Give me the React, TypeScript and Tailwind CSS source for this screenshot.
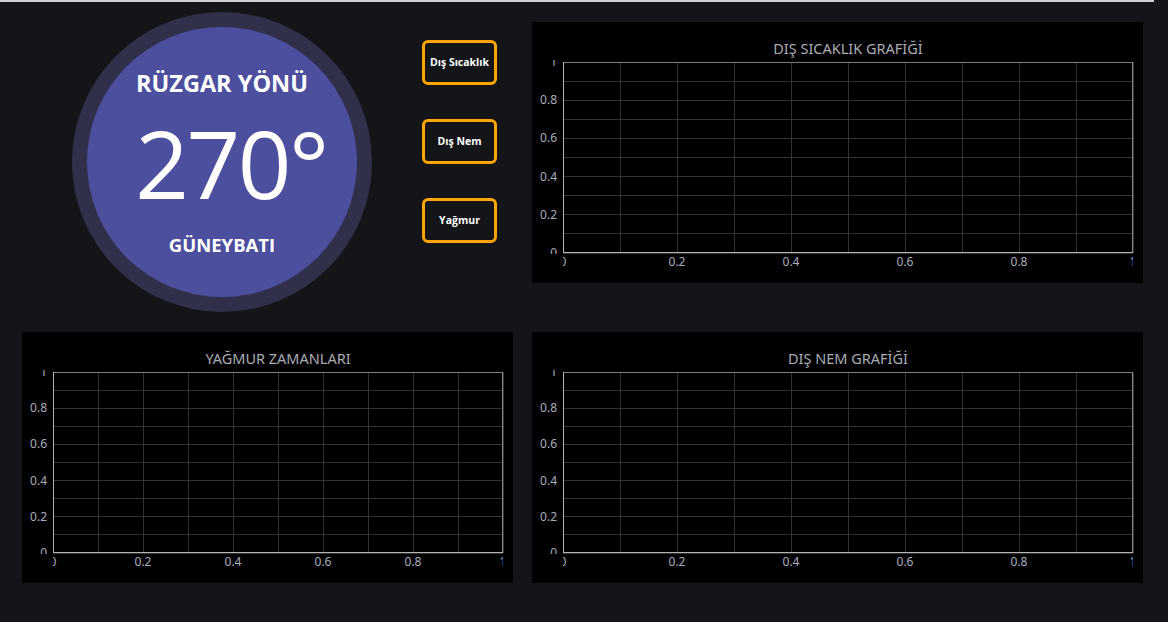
import React from "react";

type ChartProps = { width: number; height: number; title: string; id: string };

const ML = 31, MR = 10, MT = 40, MB = 30;

function Chart({ width, height, title, id }: ChartProps) {
  const pw = width - ML - MR;
  const ph = height - MT - MB;
  const x0 = ML, y0 = MT, x1 = ML + pw, y1 = MT + ph;
  const steps = Array.from({ length: 11 }, (_, i) => i / 10);
  const labels = [0, 0.2, 0.4, 0.6, 0.8, 1];
  const fmt = (v: number) => (v === 0 ? "0" : v === 1 ? "1" : v.toFixed(1));
  return (
    <div className="bg-black" style={{ width, height }}>
      <svg width={width} height={height} className="block" style={{ fontFamily: '"Noto Sans", "DejaVu Sans", sans-serif' }}>
        <defs>
          <clipPath id={`${id}-y`}>
            <rect x={0} y={y0 - 2} width={x0} height={ph + 3} />
          </clipPath>
          <clipPath id={`${id}-x`}>
            <rect x={x0} y={y1} width={pw} height={MB} />
          </clipPath>
        </defs>
        <text x={x0 + pw / 2} y={32} textAnchor="middle" fontSize={14.5} fill="#a9acb4">
          {title}
        </text>
        {steps.map((s, i) => (
          <line key={`v${i}`} x1={x0 + s * pw} x2={x0 + s * pw} y1={y0} y2={y1} stroke="#333333" strokeWidth={1} shapeRendering="crispEdges" />
        ))}
        {steps.map((s, i) => (
          <line key={`h${i}`} x1={x0} x2={x1} y1={y1 - s * ph} y2={y1 - s * ph} stroke="#333333" strokeWidth={1} shapeRendering="crispEdges" />
        ))}
        <line x1={x0} x2={x1} y1={y0 + 0.5} y2={y0 + 0.5} stroke="#7a7a7a" shapeRendering="crispEdges" />
        <line x1={x1 - 0.5} x2={x1 - 0.5} y1={y0} y2={y1} stroke="#8a8a8a" shapeRendering="crispEdges" />
        <line x1={x0 + 0.5} x2={x0 + 0.5} y1={y0} y2={y1} stroke="#b4b4b4" shapeRendering="crispEdges" />
        <line x1={x0} x2={x1} y1={y1 - 0.5} y2={y1 - 0.5} stroke="#b4b4b4" shapeRendering="crispEdges" />
        <g clipPath={`url(#${id}-y)`}>
          {labels.map((v) => (
            <text key={`yl${v}`} x={x0 - 6} y={y1 - v * ph + 4} textAnchor="end" fontSize={12} fill="#a8adbd">
              {fmt(v)}
            </text>
          ))}
        </g>
        <g clipPath={`url(#${id}-x)`}>
          {labels.map((v) => (
            <text key={`xl${v}`} x={x0 + v * pw} y={y1 + 13} textAnchor="middle" fontSize={12} fill="#a8adbd">
              {fmt(v)}
            </text>
          ))}
        </g>
      </svg>
    </div>
  );
}

function Btn({ label }: { label: string }) {
  return (
    <button
      className="w-[75px] h-[45px] rounded-[6px] border-[3px] border-[#ffa500] bg-transparent text-white text-[10.5px] font-bold flex items-center justify-center"
      style={{ fontFamily: '"Open Sans", "Noto Sans", sans-serif' }}
    >
      {label}
    </button>
  );
}

export default function App() {
  return (
    <div className="w-[1168px] h-[622px] bg-[#141519] overflow-hidden relative">
      <div className="w-[1154px] h-[2px] bg-[#cfd3d6]" />
      <div className="pl-[22px]">
        <div className="flex">
          <div className="w-[510px] flex">
            <div className="ml-[50px] mt-[10px] w-[300px] h-[300px] rounded-full bg-[#30304a] flex items-center justify-center">
              <div
                className="w-[270px] h-[270px] rounded-full bg-[#4c4f9e] flex flex-col items-center text-white"
                style={{ fontFamily: '"Open Sans", "Noto Sans", sans-serif' }}
              >
                <div className="mt-[41px] text-[23.5px] font-bold leading-[30px]">RÜZGAR YÖNÜ</div>
                <div className="mt-[5px] ml-[18px] text-[94px] font-normal leading-[120px] tracking-[-2.5px]">270°</div>
                <div className="mt-[10px] text-[18.5px] font-bold leading-[24px]">GÜNEYBATI</div>
              </div>
            </div>
            <div className="ml-[50px] mt-[38px] flex flex-col gap-[34px]">
              <Btn label="Dış Sıcaklık" />
              <Btn label="Dış Nem" />
              <Btn label="Yağmur" />
            </div>
          </div>
          <div className="mt-[20px]">
            <Chart id="c1" width={611} height={261} title="DIŞ SICAKLIK GRAFİĞİ" />
          </div>
        </div>
        <div className="flex mt-[20px] gap-[19px]">
          <Chart id="c2" width={491} height={251} title="YAĞMUR ZAMANLARI" />
          <Chart id="c3" width={611} height={251} title="DIŞ NEM GRAFİĞİ" />
        </div>
      </div>
    </div>
  );
}
